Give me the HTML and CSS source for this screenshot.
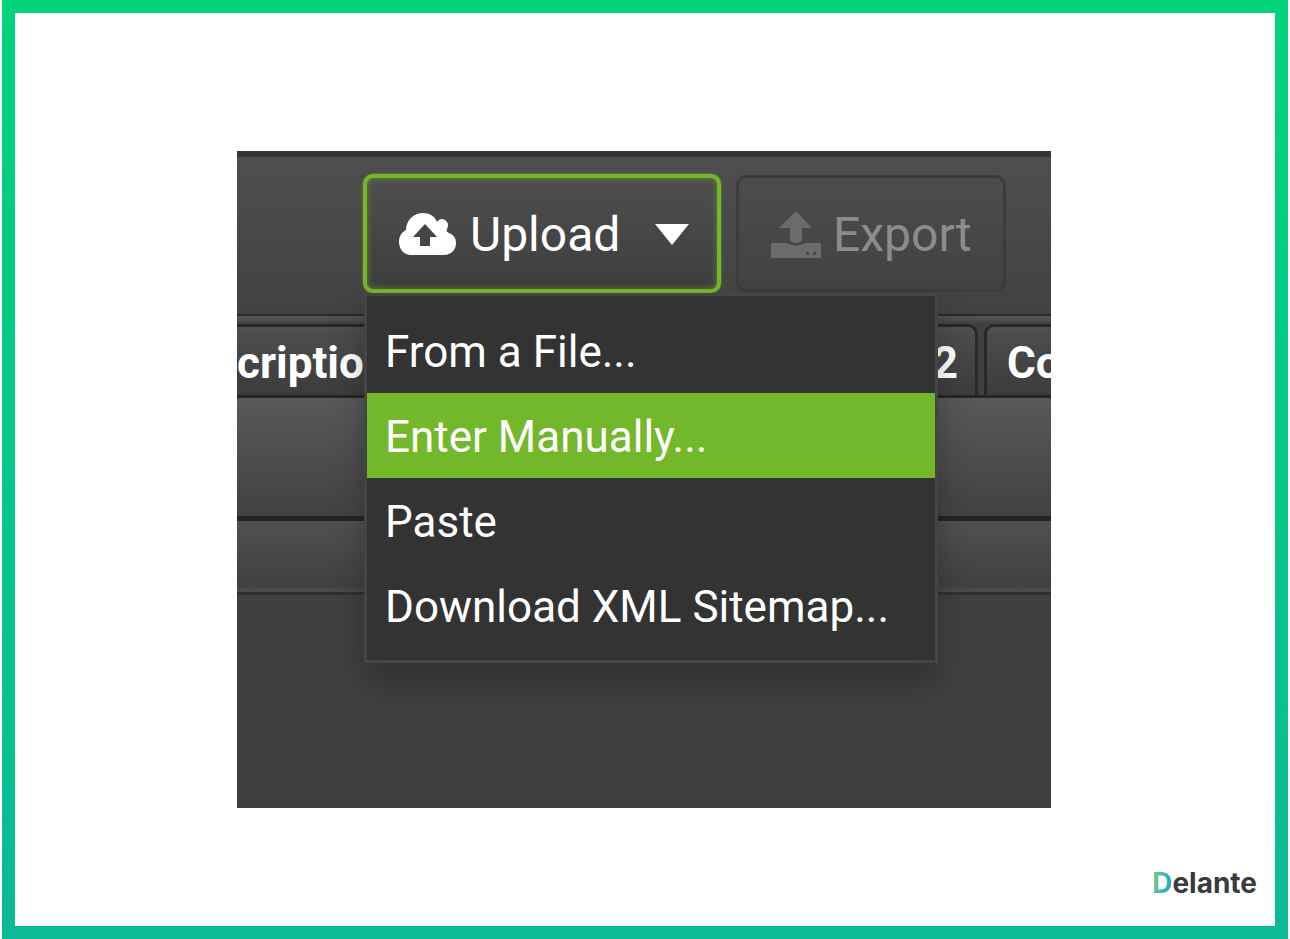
FILE: index.html
```
<!DOCTYPE html>
<html lang="en">
<head>
  <meta charset="UTF-8">
  <title>Upload menu</title>
  <link rel="stylesheet" href="styles.css">
</head>
<body>
  <div class="frame">
    <div class="page">
      <main class="app">
        <div class="toolbar">
          <div class="dropdown">
            <button class="btn btn-upload" type="button" aria-haspopup="true" aria-expanded="true">
              <svg class="icon-cloud" viewBox="0 0 58 44" aria-hidden="true">
                <path fill="#fff" d="M12 42C5 42 0 36 0 29c0-6 3-10 7-12C7 7 15 0 24 0c6 0 12 3 14 9 2-3 5-4 8-2 3 2 4 5 2 9-1 2 0 3 2 4 5 2 7 5 7 10 0 7-5 12-12 12z"/>
                <path fill="#444" d="M26 11L38 24H31V33H21V24H14z"/>
              </svg>
              <span>Upload</span>
              <svg class="icon-caret" viewBox="0 0 34 21" aria-hidden="true">
                <path fill="#fff" d="M0 0h34L17 21z"/>
              </svg>
            </button>
            <ul class="menu">
              <li><a href="#">From a File...</a></li>
              <li><a class="active" href="#">Enter Manually...</a></li>
              <li><a href="#">Paste</a></li>
              <li><a href="#">Download XML Sitemap...</a></li>
            </ul>
          </div>
          <button class="btn btn-export" type="button" disabled>
            <svg class="icon-export" viewBox="0 0 50 48" aria-hidden="true">
              <path fill="#6b6b6b" d="M25 0L41 17H31V30q-6 4-12 0V17H8zM0 32H16q9 5 18 0H50V47H0z"/>
              <path fill="#484848" d="M35 41h3v3h-3zM42 41h3v3h-3z"/>
            </svg>
            <span>Export</span>
          </button>
        </div>
        <div class="tabs">
          <div class="tab tab-first">criptio</div>
          <div class="tab tab-second">2</div>
          <div class="tab tab-last">Co</div>
        </div>
        <div class="panel"></div>
        <div class="subpanel"></div>
        <div class="content"></div>
      </main>
      <footer class="footer">
        <span class="logo"><span class="logo-d">D</span>elante</span>
      </footer>
    </div>
  </div>
</body>
</html>
```
FILE: styles.css
```
* {
  box-sizing: border-box;
}
body {
  margin: 0 2px;
  background: #fff;
  font-family: Roboto, sans-serif;
}
.frame {
  display: flex;
  min-height: 100vh;
  padding: 13px;
  background: linear-gradient(#02d47c, #0db996);
}
.page {
  flex: 1;
  min-width: 0;
  background: #fff;
  padding-top: 138px;
}
.app {
  margin: 0 224px 0 222px;
  background: #404040;
  border-top: 6px solid #343434;
}

/* toolbar */
.toolbar {
  display: flex;
  align-items: flex-start;
  gap: 15px;
  height: 157px;
  padding: 17px 0 0 126px;
  background: linear-gradient(#4e4e4e, #424242);
}
.dropdown {
  position: relative;
}
.btn {
  display: flex;
  align-items: center;
  font-family: inherit;
  font-size: 48px;
  line-height: 56px;
  border-radius: 10px;
  background: linear-gradient(#4e4e4e, #3e3e3e);
}
.btn-upload {
  width: 358px;
  height: 119px;
  padding: 2px 0 0 32px;
  color: #fff;
  border: 4px solid #76b72a;
  box-shadow: inset 0 0 6px #5f8a34, 0 0 2px #76b72a;
}
.btn-export {
  width: 270px;
  height: 117px;
  margin-top: 1px;
  padding: 2px 0 0 32px;
  color: #8c8c8c;
  border: 3px solid #3c3c3c;
  background: linear-gradient(#4c4c4c, #424242);
}
.icon-cloud {
  width: 58px;
  height: 44px;
  margin-right: 13px;
}
.icon-caret {
  width: 34px;
  height: 21px;
  margin-left: 35px;
}
.icon-export {
  width: 50px;
  height: 48px;
  margin-right: 12px;
}

/* drop-down menu */
.menu {
  position: absolute;
  top: 119px;
  left: 1px;
  z-index: 1;
  width: 574px;
  margin: 0;
  padding: 12px 0;
  list-style: none;
  background: #333;
  border: 3px solid #454545;
  box-shadow: 0 20px 30px rgba(0, 0, 0, 0.25);
}
.menu a {
  display: block;
  padding: 3px 18px 0;
  font-size: 44px;
  line-height: 82px;
  color: #fff;
  text-decoration: none;
  white-space: nowrap;
}
.menu a.active {
  background: #73b72b;
}

/* tabs and rows */
.tabs {
  display: flex;
  gap: 6px;
  height: 84px;
  padding-top: 10px;
  overflow: hidden;
  background: linear-gradient(#2a2a2a 2px, #555 2px, #404040 10px);
  border-bottom: 3px solid #262626;
}
.tab {
  border: 3px solid #282828;
  border-bottom: 0;
  border-radius: 10px 10px 0 0;
  background: linear-gradient(#4e4e4e, #3c3c3c);
  box-shadow: inset 0 3px 0 #505050;
  color: #fff;
  font-size: 44px;
  font-weight: bold;
  line-height: 72px;
}
.tab-first {
  flex: 1;
  border-left: 0;
  border-top-left-radius: 0;
}
.tab-second {
  width: 300px;
  padding-right: 17px;
  text-align: right;
}
.tab-last {
  width: 67px;
  padding-left: 20px;
  border-right: 0;
  border-top-right-radius: 0;
  overflow: hidden;
}
.panel {
  height: 123px;
  background: linear-gradient(#585858, #424242);
  border-bottom: 5px solid #252525;
}
.subpanel {
  height: 74px;
  background: linear-gradient(#505050, #404040 66px, #4a4a4a 67px);
  border-bottom: 3px solid #303030;
}
.content {
  height: 213px;
}

/* logo */
.footer {
  display: flex;
  justify-content: flex-end;
  padding: 58px 18px 26px;
}
.logo {
  font-family: Inter, sans-serif;
  font-size: 28px;
  font-weight: 700;
  line-height: 34px;
  color: #3b3b3b;
}
.logo-d {
  color: transparent;
  background: linear-gradient(100deg, #9bcb5c, #35bdb5 50%, #16a9d8);
  -webkit-background-clip: text;
  background-clip: text;
}
```
